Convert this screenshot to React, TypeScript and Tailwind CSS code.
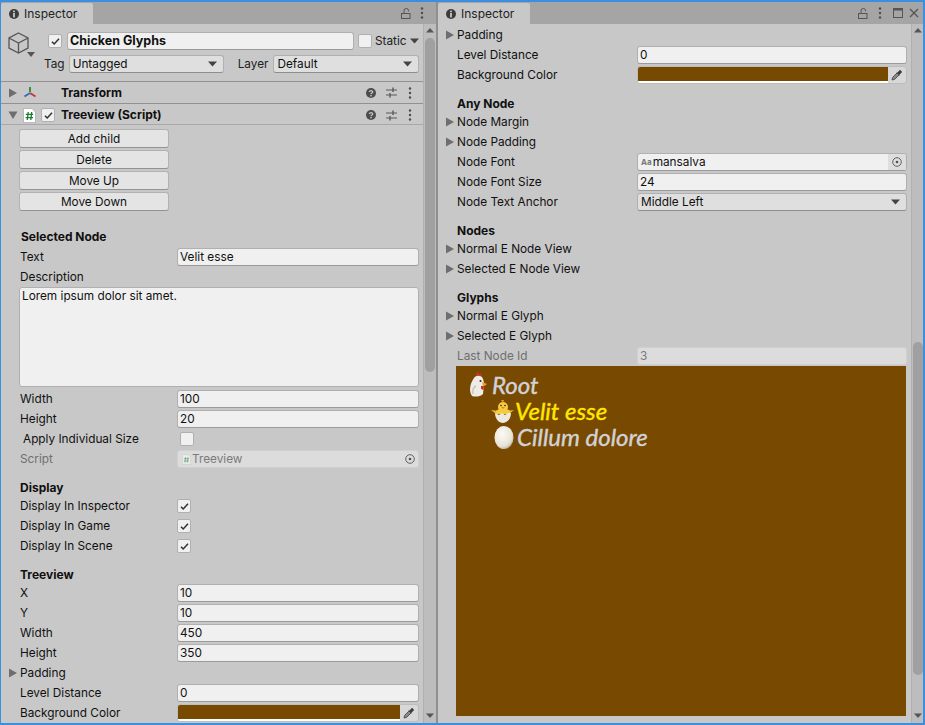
import React from "react";

const F = "[font-family:Inter,'Liberation_Sans',sans-serif]";

function Check() {
  return (
    <svg viewBox="0 0 13 13" className="w-[13px] h-[13px] shrink-0">
      <path d="M3 6.8 L5.2 9 L10 3.8" fill="none" stroke="#303030" strokeWidth="1.5" />
    </svg>
  );
}
function CheckBox({ on = true }: { on?: boolean }) {
  return (
    <div className="w-[14px] h-[14px] rounded-[2px] bg-[#f0f0f0] border border-[#b0b0b0] flex items-center justify-center shrink-0">
      {on && <Check />}
    </div>
  );
}
function Tri({ open = false }: { open?: boolean }) {
  return (
    <svg viewBox="0 0 10 10" className="w-[10px] h-[10px] shrink-0">
      {open ? <path d="M0.5 1.5 H9.5 L5 9 Z" fill="#6e6e6e" /> : <path d="M1 0.5 V9.5 L9 5 Z" fill="#6e6e6e" />}
    </svg>
  );
}
function Down() {
  return (
    <svg viewBox="0 0 9 6" className="w-[9px] h-[6px] shrink-0">
      <path d="M0 0.5 H9 L4.5 5.5 Z" fill="#444" />
    </svg>
  );
}
function Kebab() {
  return (
    <svg viewBox="0 0 4 12" className="w-[4px] h-[12px] shrink-0">
      <circle cx="2" cy="1.5" r="1.2" fill="#4d4d4d" />
      <circle cx="2" cy="6" r="1.2" fill="#4d4d4d" />
      <circle cx="2" cy="10.5" r="1.2" fill="#4d4d4d" />
    </svg>
  );
}
function Info() {
  return (
    <svg viewBox="0 0 10 10" className="w-[10px] h-[10px] shrink-0">
      <circle cx="5" cy="5" r="5" fill="#3c3c3c" />
      <rect x="4.1" y="1.6" width="1.8" height="1.6" fill="#c8c8c8" />
      <rect x="4.1" y="4" width="1.8" height="4.4" fill="#c8c8c8" />
    </svg>
  );
}
function Lock() {
  return (
    <svg viewBox="0 0 10 11" className="w-[10px] h-[11px] shrink-0">
      <path d="M3 5.5 V2.8 A2.3 2.3 0 0 1 7.6 2.8 V3.4" fill="none" stroke="#555" strokeWidth="1" />
      <rect x="0.5" y="5.5" width="8.5" height="5" fill="none" stroke="#555" strokeWidth="1" />
    </svg>
  );
}
function Help() {
  return (
    <svg viewBox="0 0 10 10" className="w-[10px] h-[10px] shrink-0">
      <circle cx="5" cy="5" r="5" fill="#4c4c4c" />
      <path d="M3.4 3.9 C3.4 2.2 6.7 2.2 6.7 3.9 C6.7 5 5 5 5 6.2" fill="none" stroke="#c8c8c8" strokeWidth="1.3" />
      <rect x="4.3" y="7" width="1.4" height="1.4" fill="#c8c8c8" />
    </svg>
  );
}
function Sliders() {
  return (
    <svg viewBox="0 0 11 11" className="w-[11px] h-[11px] shrink-0">
      <path d="M0 3 H11 M0 8 H11" stroke="#5a5a5a" strokeWidth="1" />
      <path d="M7 0.5 V5 M4 6 V10.5" stroke="#5a5a5a" strokeWidth="1.4" />
    </svg>
  );
}
function Dropper() {
  return (
    <svg viewBox="0 0 12 12" className="w-[12px] h-[12px] shrink-0">
      <path d="M1 11 L1.6 8.4 L6 4 L8 6 L3.6 10.4 Z" fill="#8a8a8a" stroke="#484848" strokeWidth="0.9" />
      <path d="M5 2.8 L6.6 3.4 L9 0.8 L11.2 3 L8.6 5.4 L9.2 7 Z" fill="#3a3a3a" />
    </svg>
  );
}
function Picker() {
  return (
    <svg viewBox="0 0 10 10" className="w-[10px] h-[10px] shrink-0">
      <circle cx="5" cy="5" r="4.3" fill="none" stroke="#606060" strokeWidth="1" />
      <circle cx="5" cy="5" r="1.3" fill="#505050" />
    </svg>
  );
}
function ScriptIcon({ faded = false }: { faded?: boolean }) {
  return (
    <svg viewBox="0 0 13 15" style={{ opacity: faded ? 0.5 : 1 }} className={faded ? "w-[9px] h-[11px] shrink-0" : "w-[13px] h-[15px] shrink-0"}>
      <path d="M0.5 0.5 H9 L12.5 4 V14.5 H0.5 Z" fill="#fff" stroke="#a8a8a8" strokeWidth="0.7" />
      <path d="M5.2 4 L4.3 12 M8.7 4 L7.8 12 M2.8 6.4 H10.2 M2.6 9.6 H10" stroke="#1f7a2e" strokeWidth="1.3" fill="none" />
    </svg>
  );
}

function Field({ children, dim = false, className = "" }: { children?: React.ReactNode; dim?: boolean; className?: string }) {
  const tone = dim ? "bg-[#dcdcdc] border-[#d0d0d0] text-[#7a7a7a]" : "bg-[#f0f0f0] border-[#b0b0b0] border-b-[#9a9a9a] text-[#101010]";
  return (
    <div className={`h-[18px] rounded-[3px] border flex items-center pl-[2px] overflow-hidden ${tone} ${className}`}>
      {children}
    </div>
  );
}
function Select({ text, className = "" }: { text: string; className?: string }) {
  return (
    <div className={`h-[18px] rounded-[3px] bg-[#dfdfdf] border border-[#b0b0b0] border-b-[#8e8e8e] flex items-center justify-between pl-[3px] pr-[6px] text-[#101010] ${className}`}>
      <span>{text}</span>
      <Down />
    </div>
  );
}
function Row({ label, children, dim = false, tri = false, triLeft = 8, left = 19, w = 242 }: { label: string; children?: React.ReactNode; dim?: boolean; tri?: boolean; triLeft?: number; left?: number; w?: number }) {
  return (
    <div className="h-5 flex items-center justify-between shrink-0 pr-1" style={{ paddingLeft: tri ? triLeft : left }}>
      <div className={`flex items-center gap-[2px] ${dim ? "text-[#6f6f6f]" : "text-[#101010]"}`}>
        {tri && <Tri />}
        <span>{label}</span>
      </div>
      {children && <div style={{ width: w }} className="shrink-0">{children}</div>}
    </div>
  );
}
function Head({ children, mt = 9, h = 18, left = 19 }: { children: React.ReactNode; mt?: number; h?: number; left?: number }) {
  return (
    <div className="flex items-center font-bold text-[12px] text-[#101010] shrink-0" style={{ marginTop: mt, height: h, paddingLeft: left }}>
      {children}
    </div>
  );
}
function Color() {
  return (
    <div className="h-[18px] flex rounded-[3px] bg-[#d8d8d8] border border-[#bdbdbd] overflow-hidden">
      <div className="flex-1 flex flex-col">
        <div className="flex-1 bg-[#784900]" />
        <div className="h-[2px] bg-white" />
      </div>
      <div className="w-[18px] flex items-center justify-center">
        <Dropper />
      </div>
    </div>
  );
}
function Btn({ children }: { children: string }) {
  return (
    <div className="h-[19px] w-[150px] rounded-[3px] bg-[#e4e4e4] border border-[#b2b2b2] border-b-[#939393] flex items-center justify-center text-[#101010] shrink-0">
      {children}
    </div>
  );
}
function Scroll({ top, height, wide = true }: { top: number; height: number; wide?: boolean }) {
  return (
    <div className={`bg-[#bdbdbd] border-l border-[#b0b0b0] relative shrink-0 ${wide ? "w-[13px]" : "w-[12px]"}`}>
      <svg viewBox="0 0 8 5" className="w-[8px] h-[5px] absolute left-[2px] top-[4px]">
        <path d="M0 4.5 H8 L4 0 Z" fill="#555" />
      </svg>
      <div className="absolute left-[1px] w-[10px] rounded-[5px] bg-[#a0a0a0]" style={{ top, height }} />
      <svg viewBox="0 0 8 5" className="w-[8px] h-[5px] absolute left-[2px] bottom-[5px]">
        <path d="M0 0.5 H8 L4 5 Z" fill="#555" />
      </svg>
    </div>
  );
}
function Cube() {
  return (
    <svg viewBox="0 0 28 26" className="w-[28px] h-[26px] shrink-0">
      <path d="M10.5 1 L20 6 V16 L10.5 21 L1 16 V6 Z M1 6 L10.5 11 L20 6 M10.5 11 V21" fill="none" stroke="#555" strokeWidth="1.3" />
      <path d="M19 20 H27 L23 25 Z" fill="#555" />
    </svg>
  );
}
function Axes() {
  return (
    <svg viewBox="0 0 14 13" className="w-[14px] h-[13px] shrink-0">
      <path d="M7 1 V6" stroke="#3a8f3a" strokeWidth="2" />
      <path d="M7 7 L1.5 10.5" stroke="#2c6fc0" strokeWidth="2" />
      <path d="M7 7 L12.5 10.5" stroke="#c03a3a" strokeWidth="2" />
    </svg>
  );
}
function Chicken() {
  return (
    <svg viewBox="0 0 20 26" className="w-[20px] h-[26px] shrink-0">
      <path d="M8 1 L10 0 L11 2 L13 1 L13.5 4 L8 5 Z" fill="#c4342a" />
      <path d="M4 24 C0 18 3 10 6 6 C8 3 14 3 15 7 C16 10 16 11 16 13 L15 22 C12 25 7 25 4 24 Z" fill="#efece6" />
      <path d="M14 10 L19 12 L15 15 Z" fill="#e8a32c" />
      <path d="M13 14 L16 14 L15.5 18 L13 17 Z" fill="#c4342a" />
      <circle cx="12.5" cy="9" r="1" fill="#222" />
      <path d="M5 22 C4 18 6 15 8 14" stroke="#c9c4ba" strokeWidth="1.5" fill="none" />
    </svg>
  );
}
function Chick() {
  return (
    <svg viewBox="0 0 24 24" className="w-[24px] h-[24px] shrink-0">
      <path d="M0 11 L8 12 L5 15 Z M23 11 L15 12 L18 15 Z" fill="#e7b92e" />
      <circle cx="12" cy="8" r="5" fill="#f6cb3d" />
      <path d="M5 12 C7 9 17 9 19 12 V15 H5 Z" fill="#f6cb3d" />
      <path d="M10 1 L12 4 L13 1 Z" fill="#e89a28" />
      <path d="M10 8 L14 8 L12 10 Z" fill="#e8832a" />
      <circle cx="10" cy="6.5" r="0.8" fill="#222" />
      <circle cx="14" cy="6.5" r="0.8" fill="#222" />
      <path d="M4 14 L8 16 L11 14 L14 16 L17 14 L20 14 C20 20 16 24 12 24 C8 24 4 20 4 14 Z" fill="#eee9de" />
    </svg>
  );
}
function Egg() {
  return (
    <svg viewBox="0 0 20 24" className="w-[20px] h-[24px] shrink-0">
      <defs>
        <radialGradient id="e" cx="0.4" cy="0.35" r="0.75">
          <stop offset="0" stopColor="#fbfaf5" />
          <stop offset="0.7" stopColor="#e8e3d6" />
          <stop offset="1" stopColor="#a89f8c" />
        </radialGradient>
      </defs>
      <ellipse cx="10" cy="12.5" rx="9.5" ry="11.5" fill="url(#e)" />
    </svg>
  );
}

const Hand = "block [font-family:Lato,sans-serif] italic text-[24px] leading-[24px] font-normal [-webkit-text-stroke:0.4px_currentColor]";

function Left() {
  return (
    <div className="w-[422px] flex flex-col shrink-0 overflow-hidden">
      <div className="h-[57px] flex flex-col shrink-0 relative">
        <div className="absolute left-[7px] top-[8px]"><Cube /></div>
        <div className="flex items-center h-[18px] mt-[8px] pl-[47px]">
          <CheckBox />
          <div className="ml-[5px] w-[287px]">
            <Field><span className="font-bold text-[12.5px]">Chicken Glyphs</span></Field>
          </div>
          <div className="ml-[4px]"><CheckBox on={false} /></div>
          <span className="ml-[3px] text-[#202020]">Static</span>
          <div className="ml-[3px]"><Down /></div>
        </div>
        <div className="flex items-center h-[18px] mt-[5px] pl-[43px] pr-[4px] text-[#202020]">
          <span>Tag</span>
          <Select text="Untagged" className="ml-[4px] w-[155px]" />
          <span className="ml-[14px]">Layer</span>
          <Select text="Default" className="ml-[5px] flex-1" />
        </div>
      </div>
      <div className="h-[23px] border-y border-[#919191] flex items-center pl-[7px] pr-[11px] font-bold text-[12px] text-[#101010] shrink-0">
        <Tri />
        <div className="ml-[5px]"><Axes /></div>
        <span className="ml-[24px]">Transform</span>
        <div className="flex-1" />
        <Help />
        <div className="ml-[10px]"><Sliders /></div>
        <div className="ml-[11px]"><Kebab /></div>
      </div>
      <div className="h-[21px] pt-[2px] border-b border-[#a8a8a8] flex items-center pl-[7px] pr-[11px] font-bold text-[12px] text-[#101010] shrink-0">
        <Tri open />
        <div className="ml-[5px]"><ScriptIcon /></div>
        <div className="ml-[5px]"><CheckBox /></div>
        <span className="ml-[6px]">Treeview (Script)</span>
        <div className="flex-1" />
        <Help />
        <div className="ml-[10px]"><Sliders /></div>
        <div className="ml-[11px]"><Kebab /></div>
      </div>
      <div className="flex flex-col gap-[2px] pl-[18px] pt-[4px]">
        <Btn>Add child</Btn>
        <Btn>Delete</Btn>
        <Btn>Move Up</Btn>
        <Btn>Move Down</Btn>
      </div>
      <Head mt={16} h={20} left={20}>Selected Node</Head>
      <Row label="Text"><Field>Velit esse</Field></Row>
      <div className="h-[20px] flex items-center pl-[19px] text-[#101010] shrink-0">Description</div>
      <div className="h-[100px] ml-[18px] mr-[4px] rounded-[3px] bg-[#f0f0f0] border border-[#b0b0b0] px-[2px] text-[#101010] shrink-0">
        Lorem ipsum dolor sit amet.
      </div>
      <div className="h-[2px] shrink-0" />
      <Row label="Width"><Field>100</Field></Row>
      <Row label="Height"><Field>20</Field></Row>
      <Row label="Apply Individual Size" left={22}>
        <div className="ml-[3px]"><CheckBox on={false} /></div>
      </Row>
      <Row label="Script" dim>
        <Field dim className="justify-between pr-[3px]">
          <span className="flex items-center gap-[1px] pl-[2px]"><ScriptIcon faded />Treeview</span>
          <Picker />
        </Field>
      </Row>
      <Head mt={11} h={16}>Display</Head>
      <Row label="Display In Inspector"><CheckBox /></Row>
      <Row label="Display In Game"><CheckBox /></Row>
      <Row label="Display In Scene"><CheckBox /></Row>
      <Head mt={10} h={17}>Treeview</Head>
      <Row label="X"><Field>10</Field></Row>
      <Row label="Y"><Field>10</Field></Row>
      <Row label="Width"><Field>450</Field></Row>
      <Row label="Height"><Field>350</Field></Row>
      <Row label="Padding" tri triLeft={7} />
      <Row label="Level Distance"><Field>0</Field></Row>
      <Row label="Background Color"><Color /></Row>
    </div>
  );
}

function Right() {
  const p = { left: 19, w: 270 };
  const t = { tri: true, triLeft: 7 };
  return (
    <div className="flex-1 flex flex-col overflow-hidden">
      <div className="h-px shrink-0" />
      <Row label="Padding" {...t} />
      <Row label="Level Distance" {...p}><Field>0</Field></Row>
      <Row label="Background Color" {...p}><Color /></Row>
      <Head mt={11} h={16}>Any Node</Head>
      <Row label="Node Margin" {...t} />
      <Row label="Node Padding" {...t} />
      <Row label="Node Font" {...p}>
        <Field className="justify-between">
          <span className="flex items-center gap-[1px] pl-[1px]">
            <span className="text-[8px] font-bold text-[#777] leading-none">Aa</span>mansalva
          </span>
          <span className="w-[18px] h-full bg-[#dedede] flex items-center justify-center"><Picker /></span>
        </Field>
      </Row>
      <Row label="Node Font Size" {...p}><Field>24</Field></Row>
      <Row label="Node Text Anchor" {...p}><Select text="Middle Left" /></Row>
      <Head mt={11} h={16}>Nodes</Head>
      <Row label="Normal E Node View" {...t} />
      <Row label="Selected E Node View" {...t} />
      <Head mt={11} h={16}>Glyphs</Head>
      <Row label="Normal E Glyph" {...t} />
      <Row label="Selected E Glyph" {...t} />
      <Row label="Last Node Id" dim {...p}>
        <Field dim>3</Field>
      </Row>
      <div className="w-[450px] h-[350px] ml-[18px] bg-[#784900] pt-[6px] pl-[12px] shrink-0 flex flex-col">
        <div className="flex items-center h-[26px]">
          <Chicken />
          <span className={`${Hand} ml-[4px] text-[#d2d2d6]`}>Root</span>
        </div>
        <div className="flex items-center pl-[23px] h-[26px]">
          <Chick />
          <span className={`${Hand} text-[#ffe800]`}>Velit esse</span>
        </div>
        <div className="flex items-center pl-[26px] h-[26px]">
          <Egg />
          <span className={`${Hand} ml-[3px] text-[#d2d2d6]`}>Cillum dolore</span>
        </div>
      </div>
    </div>
  );
}

function Tab() {
  return (
    <div className="h-[21px] w-[92px] bg-[#c8c8c8] rounded-t-[2px] flex items-center pl-[8px] gap-[5px] text-[12px] text-[#222]">
      <Info />
      <span>Inspector</span>
    </div>
  );
}

export default function App() {
  return (
    <div className={`w-[925px] h-[725px] bg-[#8f8f8f] flex border-t-2 border-b-2 border-l border-r-2 border-[#3a8fe0] overflow-hidden text-[11.8px] leading-[16px] ${F}`}>
      <div className="w-[435px] flex flex-col shrink-0 bg-[#c8c8c8]">
        <div className="h-[22px] bg-[#a5a5a5] flex items-end shrink-0">
          <Tab />
          <div className="flex-1" />
          <div className="h-[22px] flex items-center gap-[9px] pr-[12px]">
            <Lock />
            <Kebab />
          </div>
        </div>
        <div className="flex-1 flex min-h-0">
          <Left />
          <Scroll top={14} height={334} />
        </div>
      </div>
      <div className="w-[2px] shrink-0" />
      <div className="flex-1 flex flex-col bg-[#c8c8c8] min-w-0">
        <div className="h-[22px] bg-[#a5a5a5] flex items-end shrink-0">
          <Tab />
          <div className="flex-1" />
          <div className="h-[22px] flex items-center pr-[4px]">
            <Lock />
            <div className="ml-[10px]"><Kebab /></div>
            <svg viewBox="0 0 10 10" className="w-[10px] h-[10px] ml-[11px]">
              <rect x="0.5" y="0.5" width="9" height="9" fill="none" stroke="#555" />
              <rect x="0" y="0" width="10" height="2.5" fill="#555" />
            </svg>
            <svg viewBox="0 0 10 10" className="w-[10px] h-[10px] ml-[6px]">
              <path d="M1 1 L9 9 M9 1 L1 9" stroke="#555" strokeWidth="1.3" />
            </svg>
          </div>
        </div>
        <div className="flex-1 flex min-h-0">
          <Right />
          <Scroll top={318} height={333} wide={false} />
        </div>
      </div>
    </div>
  );
}
